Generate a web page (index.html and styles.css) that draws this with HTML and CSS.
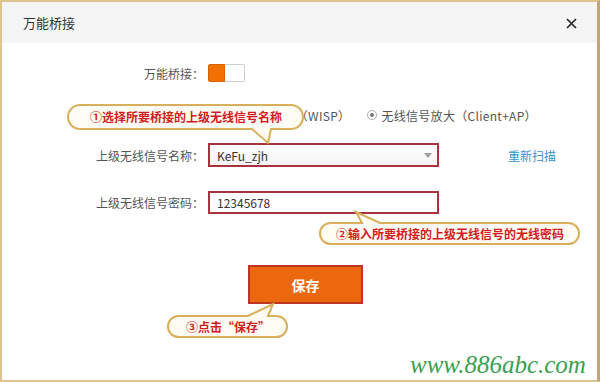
FILE: index.html
```html
<!DOCTYPE html>
<html lang="zh-CN">
<head>
<meta charset="utf-8">
<title>万能桥接</title>
<link rel="stylesheet" href="styles.css">
</head>
<body>
<div class="frame">
  <div class="header">
    <span class="title">万能桥接</span>
    <svg class="close" width="11" height="11" viewBox="0 0 11 11"><path d="M1 1 L10 10 M10 1 L1 10" stroke="#222" stroke-width="1.6" fill="none"/></svg>
  </div>
  <div class="form">
    <div class="row row-toggle">
      <span class="label">万能桥接：</span>
      <span class="toggle"><span class="toggle-on"></span><span class="toggle-off"></span></span>
    </div>
    <div class="row row-radio">
      <span class="label"></span>
      <span class="radio"></span><span class="radio-text first">无线信号中继（WISP）</span>
      <span class="radio checked second"></span><span class="radio-text">无线信号放大（Client+AP）</span>
    </div>
    <div class="row row-select">
      <span class="label">上级无线信号名称：</span>
      <span class="field select">KeFu_zjh<span class="caret"></span></span>
      <span class="rescan">重新扫描</span>
    </div>
    <div class="row row-input">
      <span class="label">上级无线信号密码：</span>
      <span class="field input">12345678</span>
    </div>
    <div class="row row-button">
      <span class="save">保存</span>
    </div>
  </div>

  <svg class="bubbles" width="600" height="382" viewBox="0 0 600 382">
    <path d="M80 105 H291 A12 12 0 0 1 291 129 H271 L268 143 L252 129 H80 A12 12 0 0 1 80 105 Z"/>
    <path d="M330.5 223 H362 L356 212 L380 223 H568.5 A10.5 10.5 0 0 1 568.5 244 H330.5 A10.5 10.5 0 0 1 330.5 223 Z"/>
    <path d="M178.5 316 H248 L273 304 L268 316 H276.5 A10.5 10.5 0 0 1 276.5 337 H178.5 A10.5 10.5 0 0 1 178.5 316 Z"/>
  </svg>
  <div class="tip tip1">①选择所要桥接的上级无线信号名称</div>
  <div class="tip tip2">②输入所要桥接的上级无线信号的无线密码</div>
  <div class="tip tip3">③点击“保存”</div>
  <div class="watermark">www.886abc.com</div>
</div>
</body>
</html>
```
FILE: styles.css
```css
* { box-sizing: border-box; }
body {
  margin: 0;
  background: #fff;
  font-family: "Noto Sans CJK SC", "Noto Sans", sans-serif;
  color: #444;
}
.frame {
  position: relative;
  width: 600px;
  height: 382px;
  border: 2px solid #e0c48e;
  border-right: 3px solid #c4a676;
  background: #fff;
  overflow: hidden;
}
.header {
  height: 41px;
  background: #f5f5f5;
  display: flex;
  align-items: center;
  justify-content: space-between;
  padding: 0 20px 0 21px;
}
.title {
  font-size: 13px;
  color: #333;
}
.close { display: block; margin-top: 2px; }
.form {
  display: flex;
  flex-direction: column;
}
.row {
  display: flex;
  align-items: center;
  font-size: 12px;
}
.label {
  width: 202px;
  text-align: right;
  color: #555;
  margin-right: 4px;
  flex: none;
}
.row-toggle { margin-top: 21px; height: 18px; }
.toggle {
  display: flex;
  width: 37px;
  height: 18px;
}
.toggle-on {
  width: 17px;
  background: #f07000;
  border: 1px solid #d86200;
  border-radius: 2px 0 0 2px;
}
.toggle-off {
  width: 20px;
  background: #fff;
  border: 1px solid #cfcfcf;
  border-left: none;
  border-radius: 0 2px 2px 0;
}
.row-radio { margin-top: 23px; height: 20px; }
.radio {
  width: 10px;
  height: 10px;
  border: 1px solid #aaa;
  border-radius: 50%;
  margin-right: 4px;
  flex: none;
  position: relative;
}
.radio.checked::after {
  content: "";
  position: absolute;
  left: 2px;
  top: 2px;
  width: 4px;
  height: 4px;
  border-radius: 50%;
  background: #777;
}
.radio.second { margin-left: 17px; }
.radio-text { color: #555; white-space: nowrap; letter-spacing: 0.3px; }
.row-select { margin-top: 18px; height: 24px; }
.field {
  width: 231px;
  border: 2px solid #a8323e;
  display: flex;
  align-items: center;
  padding-left: 7px;
  color: #333;
  font-size: 12px;
  position: relative;
}
.select {
  height: 24px;
  background: linear-gradient(#ffffff, #f4f4f4);
}
.caret {
  position: absolute;
  right: 5px;
  top: 8px;
  width: 0;
  height: 0;
  border-left: 4.5px solid transparent;
  border-right: 4.5px solid transparent;
  border-top: 5px solid #a0a0a0;
}
.rescan {
  margin-left: 69px;
  color: #3d8fcf;
}
.row-input { margin-top: 24px; height: 23px; }
.input { height: 23px; background: #fff; }
.row-button { margin-top: 51px; padding-left: 246px; }
.save {
  width: 115px;
  height: 39px;
  display: flex;
  align-items: center;
  justify-content: center;
  background: #ec680e;
  border: 2px solid #bf3526;
  color: #fff;
  font-size: 14px;
  font-weight: 700;
}
.bubbles {
  position: absolute;
  left: -2px;
  top: -2px;
}
.bubbles path {
  fill: #fffdf3;
  stroke: #d9af5c;
  stroke-width: 2;
}
.tip {
  position: absolute;
  font-size: 12px;
  font-weight: 700;
  color: #d21c22;
  white-space: nowrap;
  line-height: 16px;
  transform: translate(-50%, -50%);
}
.tip1 { left: 184px; top: 115px; }
.tip2 { left: 448px; top: 231.5px; }
.tip3 { left: 226px; top: 324.5px; }
.watermark {
  position: absolute;
  right: -3px;
  bottom: -2px;
  width: 198px;
  height: 32px;
  background: #fff;
  color: #3a9f50;
  font-family: "Liberation Serif", serif;
  font-style: italic;
  font-size: 25px;
  line-height: 30px;
  padding-left: 8px;
}
```
